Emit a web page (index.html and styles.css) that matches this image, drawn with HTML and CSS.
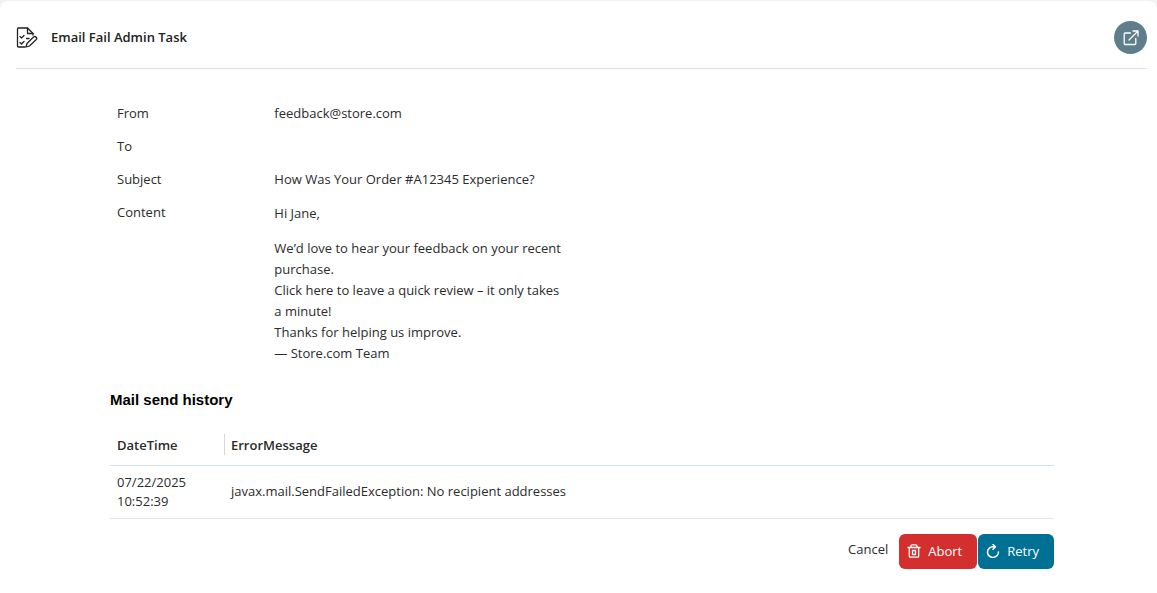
FILE: index.html
```html
<!DOCTYPE html>
<html lang="en">
<head>
<meta charset="utf-8">
<title>Email Fail Admin Task</title>
<link rel="stylesheet" href="styles.css">
</head>
<body>
<main class="panel">
  <header class="header">
    <svg class="task-icon" viewBox="0 0 22 22" fill="none" stroke="currentColor" stroke-width="1.3" stroke-linejoin="round" stroke-linecap="round" aria-hidden="true">
      <path d="M17 8V6.500L11.500 1H2.500Q1.500 1 1.500 2V19Q1.500 20 2.500 20H9"/>
      <path d="M11.500 1V6.500H17"/>
      <path d="M4 9.500L5.500 11L8 8.500M4 15.500L5.500 17L8 14.500M10.500 11.500H13"/>
      <path d="M11 16.500L17.500 10Q19 9 20.200 10.200Q21.300 11.500 20 12.800L13.500 19L10 20Z"/>
    </svg>
    <h1 class="title">Email Fail Admin Task</h1>
    <button class="open-button" type="button" aria-label="Open in new window">
      <svg class="open-icon" viewBox="0 0 16 16" fill="none" stroke="currentColor" stroke-width="1.3" stroke-linejoin="round" stroke-linecap="round" aria-hidden="true">
        <path d="M7.500 3H2.200Q1.200 3 1.200 4V13.500Q1.200 14.500 2.200 14.500H11.800Q12.800 14.500 12.800 13.500V8.500"/>
        <path d="M10 1H15V6M15 1L6 10"/>
      </svg>
    </button>
  </header>
  <div class="content">
    <dl class="details">
      <dt>From</dt><dd>feedback@store.com</dd>
      <dt>To</dt><dd></dd>
      <dt>Subject</dt><dd>How Was Your Order #A12345 Experience?</dd>
      <dt>Content</dt>
      <dd class="message">
        <p>Hi Jane,</p>
        <p>We’d love to hear your feedback on your recent purchase.<br>Click here to leave a quick review – it only takes a minute!<br>Thanks for helping us improve.<br>— Store.com Team</p>
      </dd>
    </dl>
    <h2 class="subtitle">Mail send history</h2>
    <table class="history">
      <thead><tr><th class="date" scope="col">DateTime</th><th scope="col"><span class="divider"></span>ErrorMessage</th></tr></thead>
      <tbody><tr><td>07/22/2025 10:52:39</td><td>javax.mail.SendFailedException: No recipient addresses</td></tr></tbody>
    </table>
    <div class="actions">
      <a class="cancel" href="#">Cancel</a>
      <button class="button abort" type="button">
        <svg class="button-icon" viewBox="0 0 14 14" fill="none" stroke="currentColor" stroke-width="1.3" stroke-linejoin="round" stroke-linecap="round" aria-hidden="true">
          <path d="M1 3.500H13M4 3.500V2Q4 .8 5.200 .8H8.800Q10 .8 10 2V3.500M2.300 3.500V12Q2.300 13.200 3.500 13.200H10.500Q11.700 13.200 11.700 12V3.500M5.500 6.500V10.500H8.500V6.500Z"/>
        </svg>
        Abort
      </button>
      <button class="button retry" type="button">
        <svg class="button-icon" viewBox="0 0 14 14" fill="none" stroke="currentColor" stroke-width="1.500" stroke-linejoin="round" stroke-linecap="round" aria-hidden="true">
          <path d="M12.500 8A5.500 5.300 0 1 1 7 2.800H9M7 .5L9.500 2.800L7 5.200"/>
        </svg>
        Retry
      </button>
    </div>
  </div>
</main>
</body>
</html>
```
FILE: styles.css
```css
* { box-sizing: border-box; }

body {
  margin: 0;
  background: #f2f2f2;
  color: #2b2b2b;
  font: 13px/19px "Segoe UI", "Open Sans", "Noto Sans", sans-serif;
}

.panel {
  min-height: 100vh;
  padding: 4px 10px 24px 16px;
  border-top: 1px solid #f2f2f2;
  border-radius: 8px 8px 0 0;
  background: #fff;
  background-clip: padding-box;
}

.header {
  display: flex;
  align-items: center;
  height: 64px;
  padding-top: 2px;
  border-bottom: 1px solid #dee2e6;
}

.task-icon { width: 22px; height: 22px; margin-right: 13px; color: #222; }

.title { margin: 0; font-size: 13px; font-weight: 600; color: #222; }

.open-button {
  display: flex;
  align-items: center;
  justify-content: center;
  width: 33px;
  height: 33px;
  margin-left: auto;
  padding: 0;
  border: 0;
  border-radius: 50%;
  background: #607d8b;
  color: #fff;
}

.open-icon { width: 16px; height: 16px; }

.content { padding: 28px 93px 0 94px; }

.details {
  display: grid;
  grid-template-columns: 1fr 2fr 3fr;
  margin: 0;
}

.details dt,
.details dd { min-height: 33px; margin: 0; padding: 7px; }
.details dt { grid-column: 1; }
.details dd { grid-column: 2; }

.details .message { padding-right: 14px; line-height: 21px; }
.message p { margin: 0 0 14px; }
.message p:last-child { margin: 0; }

.subtitle {
  margin: 19px 0 18px;
  color: #000;
  font: bold 15px/19px "Liberation Sans", Arial, sans-serif;
}

.history { width: 100%; border-collapse: collapse; table-layout: fixed; }

.history th,
.history td { padding: 7px; text-align: left; border-bottom: 1px solid #e6e7e8; }

.history th {
  position: relative;
  height: 38px;
  font-weight: 600;
  border-bottom-color: #d3e3e9;
}

.date { width: 114px; }

.divider {
  position: absolute;
  top: 7px;
  left: 0;
  width: 1px;
  height: 21px;
  background: #d5d8db;
}

.actions {
  display: flex;
  justify-content: flex-end;
  gap: 1px;
  margin-top: 15px;
}

.cancel {
  margin: 6px 10px 0 0;
  color: inherit;
  text-decoration: none;
}

.button {
  display: flex;
  align-items: center;
  gap: 7px;
  height: 35px;
  padding: 0 15px 0 8px;
  border: 0;
  border-radius: 6px;
  color: #fff;
  font: inherit;
}

.abort { background: #d32f2f; }
.retry { background: #007095; }
.button-icon { width: 14px; height: 14px; }
```
